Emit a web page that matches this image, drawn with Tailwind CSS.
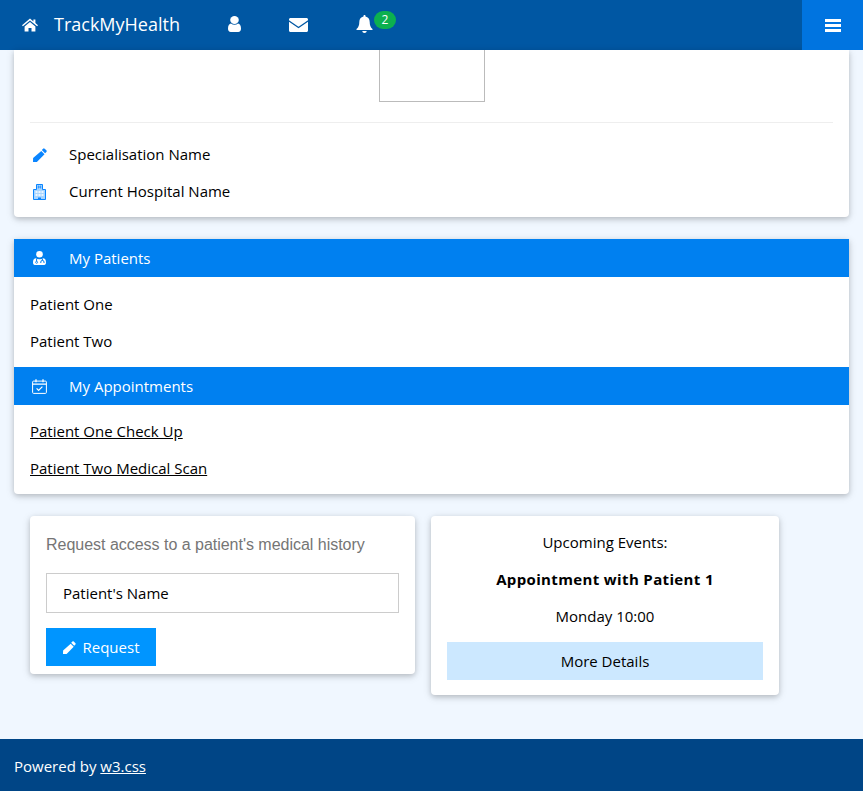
<!DOCTYPE html>
<html lang="en">
<head>
  <meta charset="UTF-8">
  <meta name="viewport" content="width=device-width, initial-scale=1.0">
  <title>TrackMyHealth</title>
  <script src="https://cdn.jsdelivr.net/npm/@tailwindcss/browser@4"></script>
</head>
<body class="bg-[#f0f7ff] font-['Open_Sans','Noto_Sans',sans-serif] text-[15px] text-black">

  <!-- Top bar -->
  <nav class="flex h-[50px] items-stretch bg-[#0057a3] text-white">
    <div class="flex items-center gap-4 pl-[22px]">
      <svg class="w-4 h-4" viewBox="0 0 16 16" fill="currentColor"><path d="M8 1.600 0 8.200l.9 1.100L8 3.500l7.100 5.800.9-1.100-2.600-2.100V2.400h-2v2.100zM2.600 9.400V14.500h3.900v-3.600h3v3.600h3.900V9.400L8 5z"/></svg>
      <span class="mb-[2px] text-[18px] leading-none">TrackMyHealth</span>
    </div>
    <div class="flex items-center pl-[48px]">
      <svg class="mb-[2px] w-[13px] h-[16px]" viewBox="0 0 13 16" fill="currentColor"><ellipse cx="6.500" cy="4" rx="4.300" ry="4"/><path d="M0 12.500C0 9.500 1.200 8 3 7.600c1 .8 2.200 1.200 3.500 1.200S9 8.400 10 7.600c1.800.4 3 1.900 3 4.900 0 2.300-1 3.500-2.800 3.500H2.800C1 16 0 14.800 0 12.500z"/></svg>
    </div>
    <div class="flex items-center pl-[48px]">
      <svg class="w-[19px] h-[14px]" viewBox="0 0 19 14" fill="currentColor"><path d="M0 1.500C0 .7.700 0 1.500 0h16c.8 0 1.500.7 1.500 1.500v.7L9.500 8.800 0 2.200z"/><path d="M0 3.700 9.500 10.200 19 3.700v8.800c0 .8-.7 1.500-1.500 1.500h-16C.7 14 0 13.300 0 12.500z"/></svg>
    </div>
    <div class="relative flex items-center pl-[48px]">
      <svg class="mb-[2px] w-[17px] h-[18px]" viewBox="0 0 17 18" fill="currentColor"><path d="M8.500 0c.6 0 1 .4 1 1v.6c2.600.5 4.200 2.600 4.200 5.300 0 3.400.8 5.200 2.800 7.100v1H.5v-1c2-1.900 2.800-3.700 2.800-7.100 0-2.700 1.600-4.800 4.200-5.300V1c0-.6.400-1 1-1z"/><path d="M6.300 16h4.400c0 1.200-1 2-2.200 2s-2.200-.8-2.200-2z"/></svg>
      <span class="absolute left-[66px] top-[11px] flex h-[18px] w-[22px] items-center justify-center rounded-full bg-[#0cb04f] text-[12px] leading-none">2</span>
    </div>
    <div class="ml-auto flex w-[61px] items-center justify-center bg-[#0074e0]">
      <div class="flex w-4 flex-col gap-[2px]">
        <span class="h-[3px] bg-white"></span>
        <span class="h-[3px] bg-white"></span>
        <span class="h-[3px] bg-white"></span>
      </div>
    </div>
  </nav>

  <main class="px-[14px] pb-[44px]">
    <!-- Profile card -->
    <section class="rounded-b bg-white px-4 pb-[7px] shadow-[0_2px_5px_rgba(0,0,0,0.16),0_2px_10px_rgba(0,0,0,0.12)]">
      <div class="mx-auto h-[52px] w-[106px] border border-t-0 border-[#bbbbbb]"></div>
      <hr class="mt-5 mb-[13px] border-[#eeeeee]">
      <div class="flex h-[37px] items-center">
        <svg class="w-[14px] h-[14px] ml-[3px] mr-[22px] text-[#0a85ff]" viewBox="0 0 13 13" fill="currentColor"><path d="M9.400.6a1 1 0 0 1 1.400 0l1.600 1.600a1 1 0 0 1 0 1.400l-1.200 1.200-3-3zM7.700 2.800l3 3L3.600 12.900 0 13l.1-3.600z"/></svg>
        <span>Specialisation Name</span>
      </div>
      <div class="flex h-[37px] items-center">
        <svg class="w-[13px] h-[16px] ml-[3px] mr-[23px] text-[#0a85ff]" viewBox="0 0 13 16" fill="none">
          <path d="M.5 15.500V5.500h3V.5h6v5h3v10z" fill="#a8d5ff" stroke="currentColor"/>
          <path d="M5.300 1.500v3M7.700 1.500v3M5.300 3h2.400" stroke="currentColor" stroke-width=".8"/>
          <path d="M2.500 8h2M5.500 8h2M8.500 8h2M2.500 11h2M5.500 11h2M8.500 11h2" stroke="#ffffff" stroke-width="1.400"/>
          <path d="M5 15.500V13.500h3v2z" fill="currentColor"/>
        </svg>
        <span>Current Hospital Name</span>
      </div>
    </section>

    <!-- Patients and appointments -->
    <section class="mt-[22px] rounded-b bg-white pb-[7px] shadow-[0_2px_5px_rgba(0,0,0,0.16),0_2px_10px_rgba(0,0,0,0.12)]">
      <div class="flex h-[38px] items-center bg-[#0080f0] px-4 text-white">
        <svg class="w-[13px] h-[14px] ml-[3px] mr-[23px]" viewBox="0 0 13 14" fill="currentColor">
          <circle cx="6.500" cy="3.300" r="3.300"/>
          <path d="M2.500 7.300c1 .6 2.400.9 4 .9s3-.3 4-.9c1.700.3 2.500 1.800 2.500 3.900 0 1.700-.6 2.800-1.800 2.800H1.800C.6 14 0 12.900 0 11.200c0-2.100.8-3.600 2.500-3.900z"/>
          <path d="M3.600 7.800v2.600M9.400 7.800v1.700M7.800 12v-1a1.600 1.600 0 0 1 3.200 0v1" fill="none" stroke="#0080f0"/>
          <circle cx="3.600" cy="11.300" r="1" fill="none" stroke="#0080f0" stroke-width=".8"/>
        </svg>
        <span>My Patients</span>
      </div>
      <div class="pt-[9px] pb-[7px]">
        <div class="flex h-[37px] items-center px-4">Patient One</div>
        <div class="flex h-[37px] items-center px-4">Patient Two</div>
      </div>
      <div class="flex h-[38px] items-center bg-[#0080f0] px-4 text-white">
        <svg class="w-[15px] h-[15px] ml-[2px] mr-[22px]" viewBox="0 0 15 15" fill="none" stroke="currentColor"><rect x=".6" y="2.100" width="13.800" height="12.300" rx="1"/><path d="M.6 5.200h13.800M4 .3v3M11 .3v3" stroke-width="1.300"/><path d="m4.600 9.400 2 2 3.800-3.800" stroke-width="1.200"/></svg>
        <span>My Appointments</span>
      </div>
      <div class="pt-2">
        <div class="flex h-[37px] items-center px-4"><a href="#" class="underline">Patient One Check Up</a></div>
        <div class="flex h-[37px] items-center px-4"><a href="#" class="underline">Patient Two Medical Scan</a></div>
      </div>
    </section>

    <!-- Bottom cards -->
    <div class="mt-[22px] flex items-start gap-4 pl-4">
      <form class="w-[385px] rounded bg-white p-4 pb-2 shadow-[0_2px_5px_rgba(0,0,0,0.16),0_2px_10px_rgba(0,0,0,0.12)]">
        <p class="font-['Liberation_Sans',sans-serif] text-[16px] leading-[26px] text-[#757575] tracking-[-0.02px]">Request access to a patient's medical history</p>
        <div class="mt-[15px] flex h-10 items-center border border-[#cccccc] px-4">Patient's Name</div>
        <button type="button" class="mt-[15px] flex h-[38px] w-[110px] items-center justify-center gap-[7px] bg-[#0095ff] text-white">
          <svg class="w-[13px] h-[13px]" viewBox="0 0 13 13" fill="currentColor"><path d="M9.400.6a1 1 0 0 1 1.400 0l1.600 1.600a1 1 0 0 1 0 1.400l-1.200 1.200-3-3zM7.700 2.800l3 3L3.600 12.900 0 13l.1-3.600z"/></svg>
          Request
        </button>
      </form>
      <div class="w-[348px] rounded bg-white px-4 pt-2 pb-[15px] text-center shadow-[0_2px_5px_rgba(0,0,0,0.16),0_2px_10px_rgba(0,0,0,0.12)]">
        <p class="flex h-[37px] items-center justify-center">Upcoming Events:</p>
        <p class="flex h-[37px] items-center justify-center font-bold tracking-[0.36px]">Appointment with Patient 1</p>
        <p class="flex h-[37px] items-center justify-center">Monday 10:00</p>
        <button type="button" class="mt-[7px] h-[38px] w-full bg-[#cce8ff]">More Details</button>
      </div>
    </div>
  </main>

  <footer class="flex h-[52px] items-center bg-[#004586] px-[14px] pt-[2px] text-white">
    <p>Powered by <a href="#" class="underline">w3.css</a></p>
  </footer>
</body>
</html>
